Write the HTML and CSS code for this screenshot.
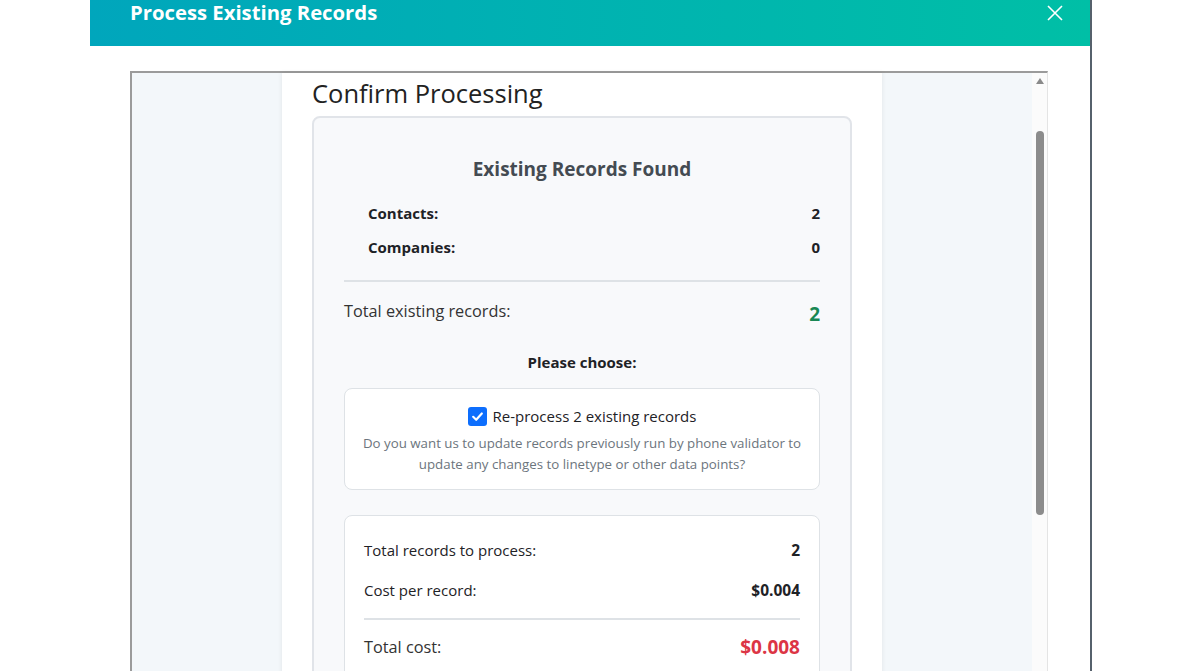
FILE: index.html
```html
<!DOCTYPE html>
<html>
    <head>
        <meta charset="utf-8">
        <title>Process Existing Records</title>
        <link rel="stylesheet" href="styles.css">
    </head>
    <body>
        <div class="modal">
            <div class="modal-head">
                <span class="modal-title">Process Existing Records</span>
                <span class="close">
                    <svg width="18" height="18" viewBox="0 0 18 18"><path d="M2 2L16 16M16 2L2 16" stroke="#fff" stroke-width="1.6" fill="none"/></svg>
                </span>
            </div>

            <div class="modal-body">
                <div class="frame">
                    <div class="view">
                        <div class="card">
                            <h2>Confirm Processing</h2>

                            <div class="found">
                                <h3>Existing Records Found</h3>
                                <div class="row sub"><span>Contacts:</span><span>2</span></div>
                                <div class="row sub"><span>Companies:</span><span>0</span></div>
                                <div class="line"></div>
                                <div class="row total"><span>Total existing records:</span><span class="green">2</span></div>

                                <p class="choose">Please choose:</p>

                                <div class="option">
                                    <label class="check">
                                        <span class="box">
                                            <svg width="13" height="13" viewBox="0 0 12 12"><path d="M2 6.3L4.8 9L10 3.2" stroke="#fff" stroke-width="2" fill="none" stroke-linecap="round" stroke-linejoin="round"/></svg>
                                        </span>
                                        Re-process 2 existing records
                                    </label>
                                    <p class="desc">Do you want us to update records previously run by phone validator to update any changes to linetype or other data points?</p>
                                </div>

                                <div class="summary">
                                    <div class="row cost"><span>Total records to process:</span><b>2</b></div>
                                    <div class="row cost"><span>Cost per record:</span><b>$0.004</b></div>
                                    <div class="line small"></div>
                                    <div class="row total"><span>Total cost:</span><span class="red">$0.008</span></div>
                                </div>
                            </div>
                        </div>
                    </div>
                    <div class="scroll">
                        <span class="arrow"></span>
                        <span class="thumb"></span>
                    </div>
                </div>
            </div>
        </div>
    </body>
</html>
```

FILE: styles.css
```css
body {
    margin: 0;
    background: #fff;
    overflow: hidden;
    font-family: "Open Sans", "Noto Sans", sans-serif;
    color: #1e2226;
}

.modal {
    margin-left: 90px;
    width: 1000px;
    height: 671px;
    border-right: 2px solid #56616c;
    background: #fff;
}

.modal-head {
    height: 46px;
    background: linear-gradient(90deg, #00a6bc, #00bfa6);
    display: flex;
    justify-content: space-between;
    padding: 0 26px 0 40px;
}

.modal-title {
    color: #fff;
    font-weight: 700;
    font-size: 20.3px;
    line-height: 25px;
}

.close {margin-top: 4px;}

.modal-body {padding: 25px 42px 0 40px;}

.frame {
    display: flex;
    height: 640px;
    border: 2px solid #9b9b9b;
    border-right: 1px solid #e4e4e4;
    border-bottom: 0;
}

.view {
    width: 900px;
    background: #f3f7fa;
}

.scroll {
    width: 15px;
    background: #fbfbfb;
    display: flex;
    flex-direction: column;
    align-items: center;
}

.arrow {
    margin-top: 5px;
    border-left: 4px solid transparent;
    border-right: 4px solid transparent;
    border-bottom: 6px solid #8a8a8a;
}

.thumb {
    margin-top: 47px;
    width: 8px;
    height: 384px;
    border-radius: 4px;
    background: #8c8c8c;
}

.card {
    width: 540px;
    margin: 0 auto;
    padding: 3px 30px 0;
    height: 637px;
    background: #fff;
    box-shadow: 0 0 5px rgba(0, 0, 0, 0.08);
}

h2 {
    margin: 0 0 6px;
    font-size: 25.5px;
    font-weight: 500;
    line-height: 34px;
    color: #222;
}

.found {
    background: #f8f9fb;
    border: 2px solid #e1e4e9;
    border-radius: 8px;
    padding: 30px 30px 0;
    height: 600px;
}

h3 {
    margin: 10px 0 15px;
    text-align: center;
    font-size: 19px;
    line-height: 23px;
    color: #444b52;
}

.row {
    display: flex;
    justify-content: space-between;
    align-items: flex-start;
}

.sub {
    padding: 7px 0 7px 24px;
    font-size: 15px;
    font-weight: 700;
    line-height: 20px;
}

.line {
    height: 2px;
    background: #dee2e6;
    margin: 16px 0 17px;
}

.total {
    font-size: 16.3px;
    line-height: 24px;
    color: #333;
}

.green, .red {
    margin-top: 3px;
    font-size: 19px;
    font-weight: 700;
}

.green {color: #198754;}
.red {color: #dc3545;}

.choose {
    margin: 26px 0 16px;
    text-align: center;
    font-size: 15px;
    font-weight: 700;
    line-height: 20px;
}

.option {
    background: #fff;
    border: 1px solid #dee2e6;
    border-radius: 8px;
    padding: 15px 15px 14px;
    text-align: center;
}

.check {
    display: flex;
    justify-content: center;
    align-items: center;
    gap: 6px;
    font-size: 15px;
    line-height: 24px;
}

.box {
    width: 19px;
    height: 19px;
    border-radius: 3px;
    background: #0d6efd;
    display: flex;
    align-items: center;
    justify-content: center;
}

.desc {
    margin: 5px 0 0;
    font-size: 13.3px;
    line-height: 21px;
    color: #6c757d;
}

.summary {
    margin-top: 25px;
    background: #fff;
    border: 1px solid #dee2e6;
    border-radius: 8px;
    padding: 14px 19px 20px;
}

.cost {
    padding: 10px 0;
    font-size: 15px;
    line-height: 20px;
}

.cost b {font-size: 15.5px;}

.line.small {margin: 8px 0 13px;}

.summary .total span {margin-top: 2px;}
```
